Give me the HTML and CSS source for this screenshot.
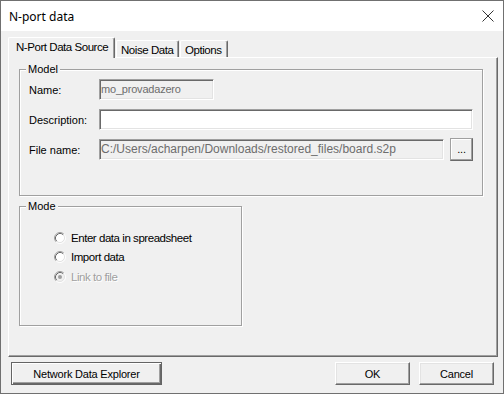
FILE: index.html
```html
<!DOCTYPE html>
<html lang="en">
<head>
    <meta charset="UTF-8">
    <title>N-port data</title>
    <link rel="stylesheet" href="styles.css">
</head>
<body>
    <div class="window">
        <div class="titlebar">
            <span class="title">N-port data</span>
            <svg class="close" width="12" height="12" viewBox="0 0 12 12">
                <path d="M0.5 0.5 L11.5 11.5 M11.5 0.5 L0.5 11.5" stroke="#333" stroke-width="1" fill="none"/>
            </svg>
        </div>
        <div class="client">
            <div class="tabs">
                <div class="tab active">N-Port Data Source</div>
                <div class="tab noise">Noise Data</div>
                <div class="tab options">Options</div>
            </div>
            <div class="panel">
                <fieldset class="group model">
                    <legend>Model</legend>
                    <div class="group-body">
                        <div class="row">
                            <span class="label">Name:</span>
                            <div class="field disabled name-field">mo_provadazero</div>
                        </div>
                        <div class="row">
                            <span class="label">Description:</span>
                            <div class="field desc-field"></div>
                        </div>
                        <div class="row">
                            <span class="label">File name:</span>
                            <div class="field disabled file-field">C:/Users/acharpen/Downloads/restored_files/board.s2p</div>
                            <div class="btn browse">...</div>
                        </div>
                    </div>
                </fieldset>
                <fieldset class="group mode">
                    <legend>Mode</legend>
                    <div class="group-body">
                        <div class="radio">
                            <svg width="12" height="12" viewBox="0 0 12 12">
                                <circle cx="6" cy="6" r="4.5" fill="#fff"/>
                                <path d="M2.11 9.89 A5.5 5.5 0 0 1 9.89 2.11" stroke="#a0a0a0" fill="none"/>
                                <path d="M2.82 9.18 A4.5 4.5 0 0 1 9.18 2.82" stroke="#696969" fill="none"/>
                                <path d="M9.89 2.11 A5.5 5.5 0 0 1 2.11 9.89" stroke="#fff" fill="none"/>
                                <path d="M9.18 2.82 A4.5 4.5 0 0 1 2.82 9.18" stroke="#e3e3e3" fill="none"/>
                            </svg>
                            <span>Enter data in spreadsheet</span>
                        </div>
                        <div class="radio">
                            <svg width="12" height="12" viewBox="0 0 12 12">
                                <circle cx="6" cy="6" r="4.5" fill="#fff"/>
                                <path d="M2.11 9.89 A5.5 5.5 0 0 1 9.89 2.11" stroke="#a0a0a0" fill="none"/>
                                <path d="M2.82 9.18 A4.5 4.5 0 0 1 9.18 2.82" stroke="#696969" fill="none"/>
                                <path d="M9.89 2.11 A5.5 5.5 0 0 1 2.11 9.89" stroke="#fff" fill="none"/>
                                <path d="M9.18 2.82 A4.5 4.5 0 0 1 2.82 9.18" stroke="#e3e3e3" fill="none"/>
                            </svg>
                            <span>Import data</span>
                        </div>
                        <div class="radio disabled">
                            <svg width="12" height="12" viewBox="0 0 12 12">
                                <circle cx="6" cy="6" r="4.5" fill="#f0f0f0"/>
                                <path d="M2.11 9.89 A5.5 5.5 0 0 1 9.89 2.11" stroke="#a0a0a0" fill="none"/>
                                <path d="M2.82 9.18 A4.5 4.5 0 0 1 9.18 2.82" stroke="#696969" fill="none"/>
                                <path d="M9.89 2.11 A5.5 5.5 0 0 1 2.11 9.89" stroke="#fff" fill="none"/>
                                <path d="M9.18 2.82 A4.5 4.5 0 0 1 2.82 9.18" stroke="#e3e3e3" fill="none"/>
                                <circle cx="6" cy="6" r="2" fill="#a0a0a0"/>
                            </svg>
                            <span>Link to file</span>
                        </div>
                    </div>
                </fieldset>
            </div>
            <div class="buttons">
                <div class="btn default explorer">Network Data Explorer</div>
                <div class="spacer"></div>
                <div class="btn dialog-btn">OK</div>
                <div class="btn dialog-btn">Cancel</div>
            </div>
        </div>
    </div>
</body>
</html>
```

FILE: styles.css
```css
body {
    margin: 0;
    font-family: "Liberation Sans", Arial, sans-serif;
    font-size: 11px;
    color: #000;
    background: #f0f0f0;
}

.window {
    width: 504px;
    height: 394px;
    box-sizing: border-box;
    border: 1px solid #707070;
    background: #f0f0f0;
    display: flex;
    flex-direction: column;
}

.titlebar {
    height: 30px;
    background: #fff;
    display: flex;
    align-items: center;
    justify-content: space-between;
    padding: 0 9px 0 8px;
}

.title {
    font-family: "Noto Sans", "Open Sans", sans-serif;
    font-size: 12px;
    color: #000;
}

.client {
    padding: 6px 5px 0 7px;
}

/* tabs */
.tabs {
    display: flex;
    align-items: flex-end;
    height: 20px;
}

.tab {
    height: 17px;
    line-height: 18px;
    box-sizing: border-box;
    border-top: 1px solid #fff;
    border-left: 1px solid #fff;
    border-right: 1px solid #696969;
    box-shadow: inset -1px 0 0 #a0a0a0;
    border-radius: 2px 2px 0 0;
    white-space: nowrap;
    font-size: 11.5px;
    letter-spacing: -0.45px;
}

.tab.active {
    height: 21px;
    line-height: 18px;
    width: 107px;
    padding-left: 7px;
    margin-bottom: -1px;
    background: #f0f0f0;
    position: relative;
    z-index: 1;
}

.tab.noise {
    width: 63px;
    padding-left: 4px;
    margin-left: 1px;
}

.tab.options {
    width: 48px;
    padding-left: 4px;
    margin-left: 1px;
}

.panel {
    height: 300px;
    box-sizing: border-box;
    border: 1px solid;
    border-color: #fff #696969 #696969 #fff;
    box-shadow: inset -1px -1px 0 #a0a0a0;
    padding: 5px 0 0 10px;
    display: flex;
    flex-direction: column;
    align-items: flex-start;
}

/* group boxes */
.group {
    margin: 0;
    padding: 0;
    box-sizing: border-box;
    border: 1px solid #a0a0a0;
    box-shadow: inset 1px 1px 0 #fff, 1px 1px 0 #fff;
    min-inline-size: 0;
}

.group legend {
    padding: 0 2px;
    margin-left: 6px;
    line-height: 13px;
    background: #f0f0f0;
}

.model {
    width: 464px;
    height: 133px;
}

.model .group-body {
    padding: 2px 0 0 9px;
}

.row {
    display: flex;
    align-items: center;
    height: 23px;
    margin-bottom: 7px;
}

.label {
    width: 70px;
}

.field {
    height: 21px;
    box-sizing: border-box;
    border: 1px solid;
    border-color: #a0a0a0 #fff #fff #a0a0a0;
    box-shadow: inset 1px 1px 0 #696969, inset -1px -1px 0 #e3e3e3;
    background: #fff;
    padding: 0 2px 0 1px;
    font-size: 12px;
    line-height: 19px;
    white-space: nowrap;
    overflow: hidden;
}

.field.disabled {
    background: #f0f0f0;
    color: #6d6d6d;
}

.name-field {
    width: 115px;
    font-size: 11px;
    letter-spacing: -0.2px;
}

.desc-field {
    width: 374px;
}

.file-field {
    width: 345px;
}

.btn {
    box-sizing: border-box;
    border: 1px solid;
    border-color: #fff #696969 #696969 #fff;
    box-shadow: inset -1px -1px 0 #a0a0a0, inset 1px 1px 0 #e3e3e3;
    background: #f0f0f0;
    display: flex;
    align-items: center;
    justify-content: center;
    letter-spacing: -0.2px;
}

.browse {
    width: 23px;
    height: 23px;
    margin-left: 6px;
    padding-bottom: 2px;
    border-color: #a0a0a0 #696969 #696969 #a0a0a0;
    box-shadow: inset -1px -1px 0 #a0a0a0, inset 1px 1px 0 #fff;
}

.mode {
    width: 223px;
    height: 126px;
    margin-top: 4px;
}

.mode .group-body {
    padding: 15px 0 0 34px;
}

.radio {
    display: flex;
    align-items: center;
    height: 19.5px;
    font-size: 11.5px;
    letter-spacing: -0.45px;
}

.radio svg {
    margin-right: 5px;
}

.radio.disabled span {
    color: #a0a0a0;
    text-shadow: 1px 1px 0 #fff;
}

/* bottom buttons */
.buttons {
    display: flex;
    margin-top: 5px;
    padding: 0 4px 0 3px;
}

.spacer {
    flex: 1;
}

.btn.default {
    border-color: #646464;
    box-shadow: inset 1px 1px 0 #fff, inset -1px -1px 0 #696969, inset -2px -2px 0 #a0a0a0;
}

.explorer {
    width: 151px;
    height: 23px;
}

.dialog-btn {
    width: 75px;
    height: 23px;
    margin-left: 9px;
}
```
